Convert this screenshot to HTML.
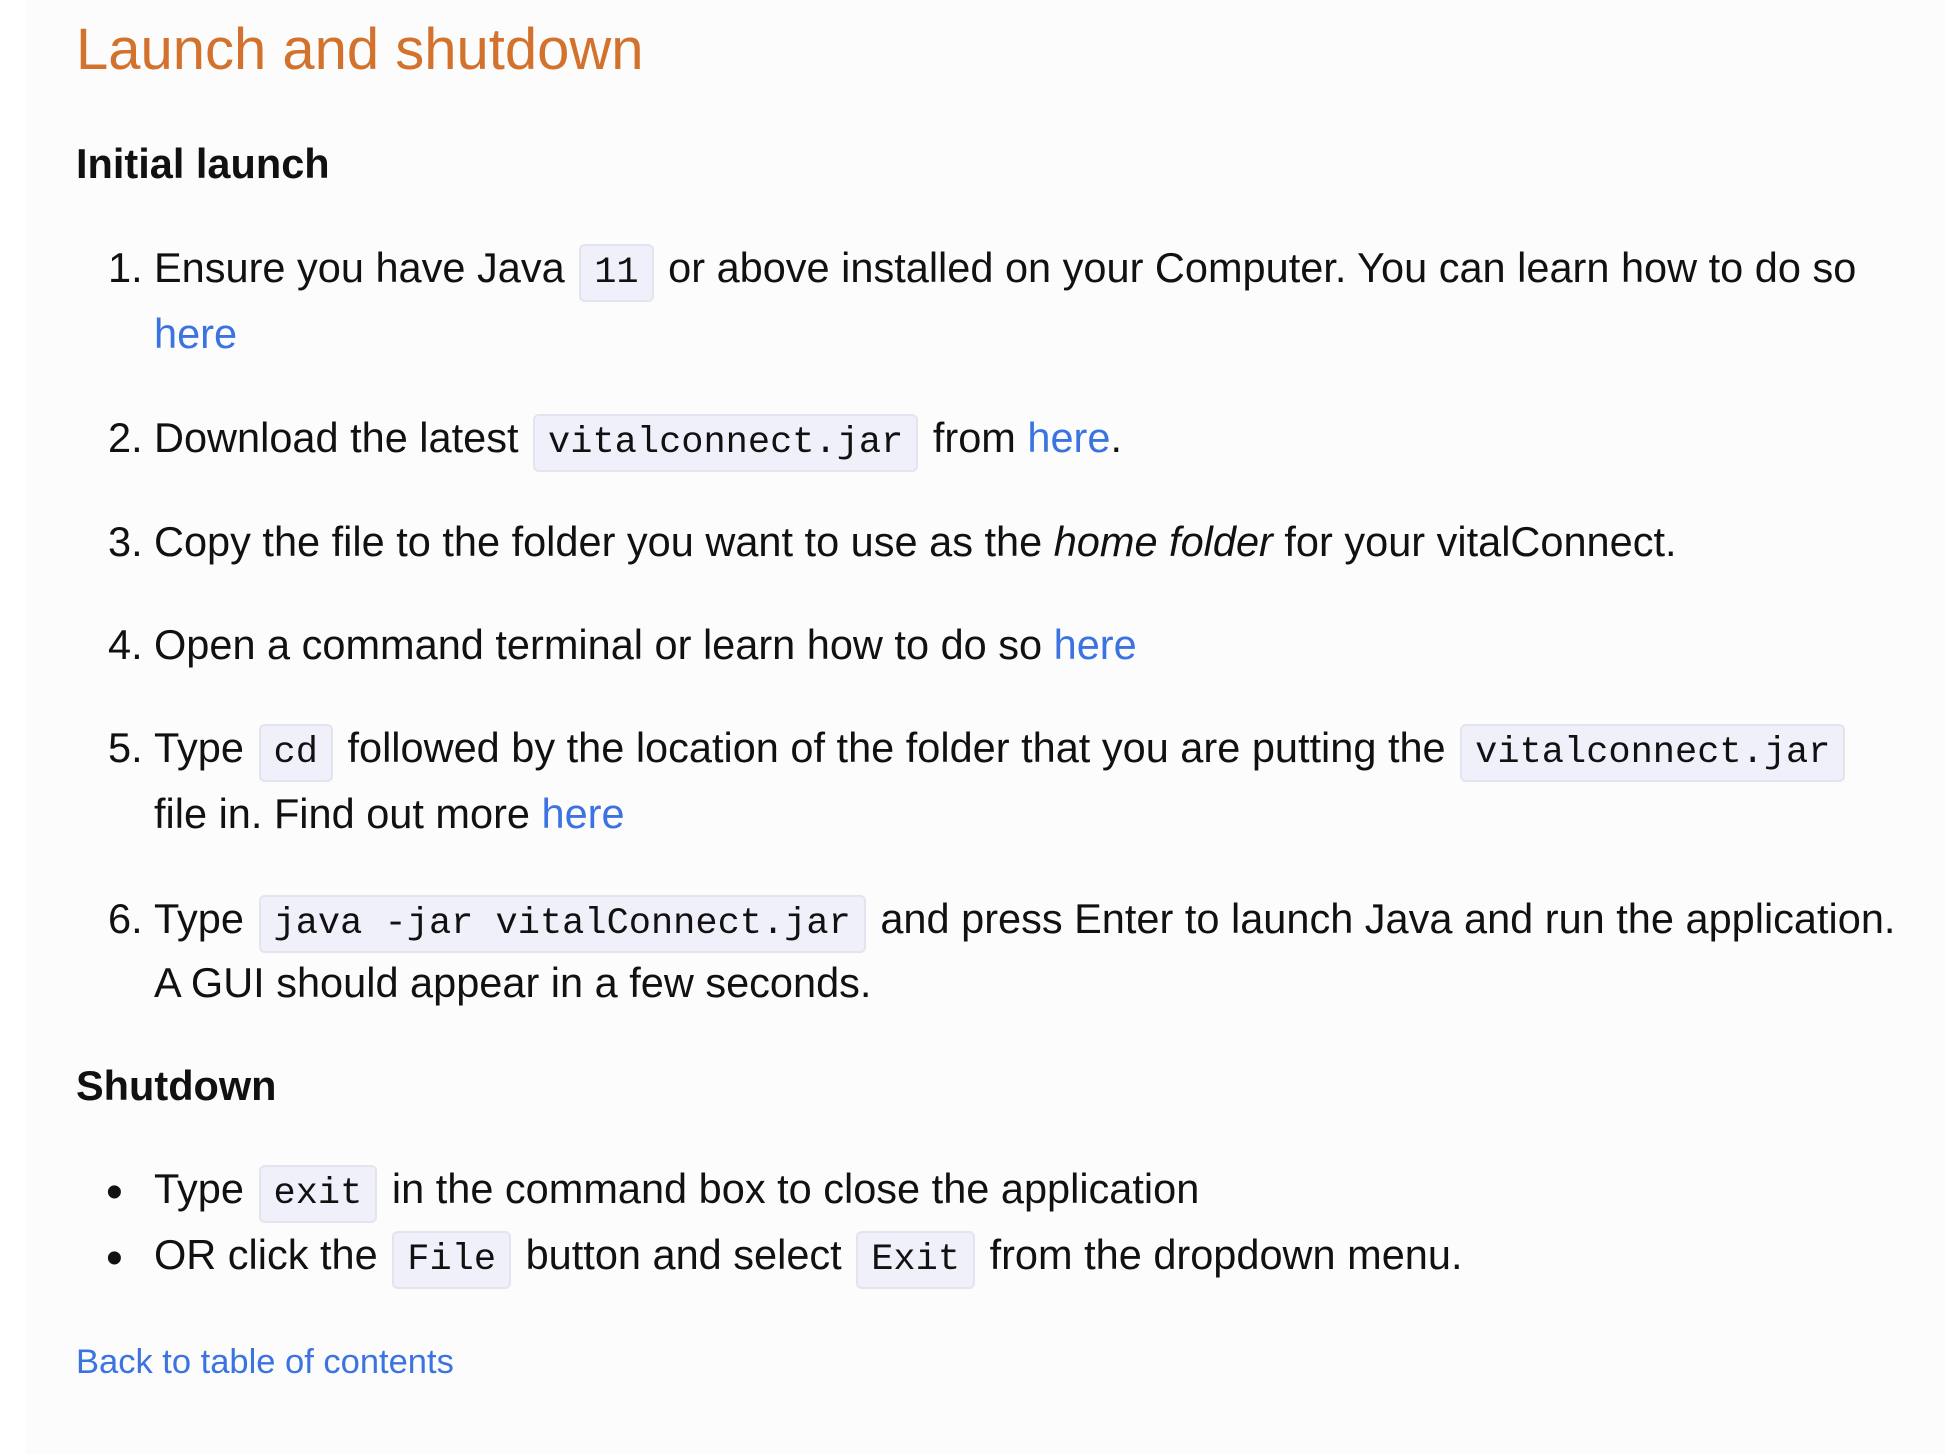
<!DOCTYPE html>
<html><head><meta charset="utf-8"><style>
html,body{margin:0;padding:0;background:#fff;width:1952px;height:1454px;overflow:hidden}
.panel{position:absolute;left:26px;top:0;width:1919px;height:1454px;background:#fcfcfc}
.l{position:absolute;left:154px;height:66px;line-height:66px;font-family:"Liberation Sans",sans-serif;font-size:41.5px;color:#111;white-space:nowrap}
.n{position:absolute;left:-46px}
h1,h3{margin:0;position:absolute;left:76px;font-family:"Liberation Sans",sans-serif;white-space:nowrap}
h1{font-weight:normal;color:#d2722c;font-size:58px;top:14px;line-height:72px}
h3{font-size:41.5px;font-weight:bold;color:#111;line-height:50px}
a{color:#3b73e0;text-decoration:none}
code{font-family:"Liberation Mono",monospace;font-size:37px;background:#f0f0fa;border:2px solid #e4e4ee;border-radius:6px;padding:6px 13px;margin:0 3px}
.b{position:absolute;left:-48px;top:4px;font-size:48px}
</style></head><body>
<div class="panel"></div>
<h1>Launch and shutdown</h1>
<h3 style="top:139px">Initial launch</h3>
<div class="l" style="top:235px"><span class="n">1.</span>Ensure you have Java <code>11</code> or above installed on your Computer. You can learn how to do so</div>
<div class="l" style="top:301px"><a>here</a></div>
<div class="l" style="top:405px"><span class="n">2.</span>Download the latest <code>vitalconnect.jar</code> from <a>here</a>.</div>
<div class="l" style="top:509px"><span class="n">3.</span>Copy the file to the folder you want to use as the <i>home folder</i> for your vitalConnect.</div>
<div class="l" style="top:612px"><span class="n">4.</span>Open a command terminal or learn how to do so <a>here</a></div>
<div class="l" style="top:715px"><span class="n">5.</span>Type <code>cd</code> followed by the location of the folder that you are putting the <code>vitalconnect.jar</code></div>
<div class="l" style="top:781px">file in. Find out more <a>here</a></div>
<div class="l" style="top:886px"><span class="n">6.</span>Type <code>java -jar vitalConnect.jar</code> and press Enter to launch Java and run the application.</div>
<div class="l" style="top:950px">A GUI should appear in a few seconds.</div>
<h3 style="top:1061px">Shutdown</h3>
<div class="l" style="top:1156px"><span class="b">•</span>Type <code>exit</code> in the command box to close the application</div>
<div class="l" style="top:1222px"><span class="b">•</span>OR click the <code>File</code> button and select <code>Exit</code> from the dropdown menu.</div>
<div class="l" style="top:1329px;left:76px;font-size:34.5px"><a>Back to table of contents</a></div>
</body></html>
